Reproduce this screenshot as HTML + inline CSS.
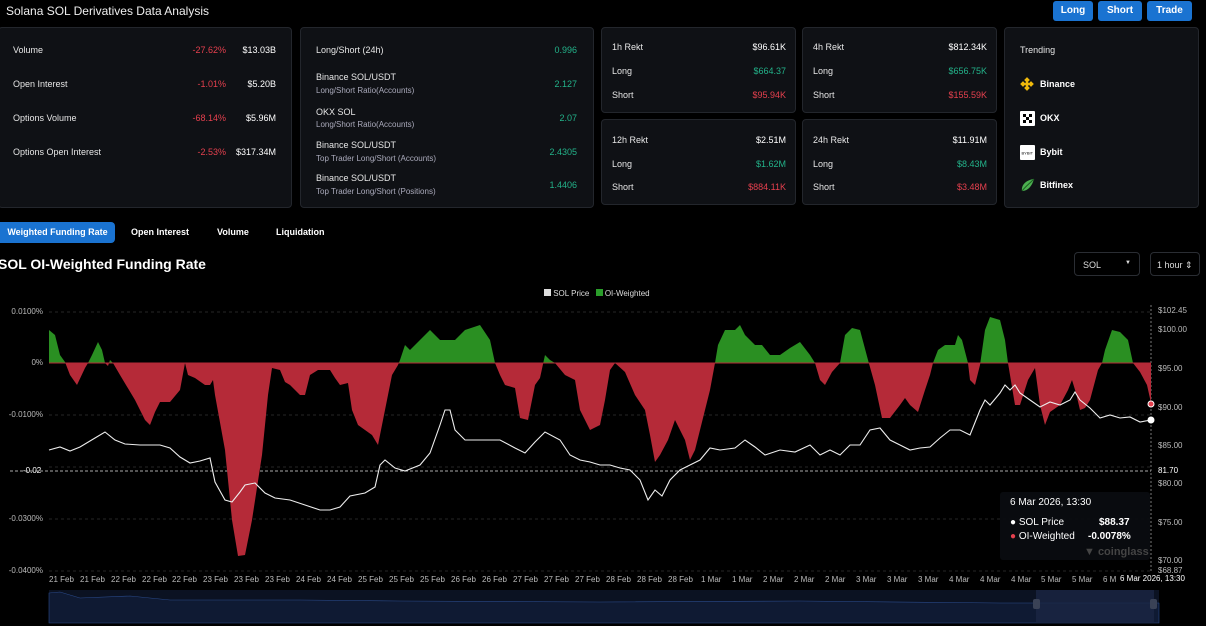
<!DOCTYPE html>
<html><head><meta charset="utf-8"><style>
*{margin:0;padding:0;box-sizing:border-box}
body{width:1206px;height:626px;background:#000;color:#e6e6e6;font-family:"Liberation Sans",sans-serif;position:relative;overflow:hidden;font-size:9px}
.a{position:absolute;white-space:nowrap}
.card{position:absolute;background:#0f1115;border:1px solid #23262c;border-radius:4px}
.r{color:#e5404e}.g{color:#23b38a}.w{color:#fff}
.btn{position:absolute;top:1px;height:20px;background:#1a73d1;color:#fff;font-weight:bold;font-size:10px;border-radius:3px;text-align:center;line-height:20px}
.sub{color:#aab;font-size:8px}
.yl{position:absolute;font-size:8px;color:#bbb;right:1163px}
.yr{position:absolute;font-size:8px;color:#bbb;left:1158px}
.xl{position:absolute;top:575px;font-size:8px;color:#bbb}
</style></head><body>
<div class="a" style="left:6px;top:4px;font-size:12px;color:#eee">Solana SOL Derivatives Data Analysis</div>
<div class="btn" style="left:1053px;width:40px">Long</div>
<div class="btn" style="left:1098px;width:44px">Short</div>
<div class="btn" style="left:1147px;width:45px">Trade</div>

<div class="card" style="left:-2px;top:27px;width:294px;height:181px"></div>
<div class="a" style="left:13px;top:45px">Volume</div><div class="a r" style="right:980px;top:45px">-27.62%</div><div class="a w" style="right:930px;top:45px">$13.03B</div>
<div class="a" style="left:13px;top:79px">Open Interest</div><div class="a r" style="right:980px;top:79px">-1.01%</div><div class="a w" style="right:930px;top:79px">$5.20B</div>
<div class="a" style="left:13px;top:113px">Options Volume</div><div class="a r" style="right:980px;top:113px">-68.14%</div><div class="a w" style="right:930px;top:113px">$5.96M</div>
<div class="a" style="left:13px;top:147px">Options Open Interest</div><div class="a r" style="right:980px;top:147px">-2.53%</div><div class="a w" style="right:930px;top:147px">$317.34M</div>

<div class="card" style="left:300px;top:27px;width:294px;height:181px"></div>
<div class="a" style="left:316px;top:45px">Long/Short (24h)</div><div class="a g" style="right:629px;top:45px">0.996</div>
<div class="a" style="left:316px;top:72px">Binance SOL/USDT</div><div class="a sub" style="left:316px;top:86px">Long/Short Ratio(Accounts)</div><div class="a g" style="right:629px;top:79px">2.127</div>
<div class="a" style="left:316px;top:107px">OKX SOL</div><div class="a sub" style="left:316px;top:120px">Long/Short Ratio(Accounts)</div><div class="a g" style="right:629px;top:113px">2.07</div>
<div class="a" style="left:316px;top:140px">Binance SOL/USDT</div><div class="a sub" style="left:316px;top:154px">Top Trader Long/Short (Accounts)</div><div class="a g" style="right:629px;top:147px">2.4305</div>
<div class="a" style="left:316px;top:173px">Binance SOL/USDT</div><div class="a sub" style="left:316px;top:187px">Top Trader Long/Short (Positions)</div><div class="a g" style="right:629px;top:180px">1.4406</div>

<div class="card" style="left:601px;top:27px;width:195px;height:86px"></div>
<div class="a" style="left:612px;top:42px">1h Rekt</div><div class="a w" style="right:420px;top:42px">$96.61K</div>
<div class="a" style="left:612px;top:66px">Long</div><div class="a g" style="right:420px;top:66px">$664.37</div>
<div class="a" style="left:612px;top:90px">Short</div><div class="a r" style="right:420px;top:90px">$95.94K</div>
<div class="card" style="left:601px;top:119px;width:195px;height:86px"></div>
<div class="a" style="left:612px;top:135px">12h Rekt</div><div class="a w" style="right:420px;top:135px">$2.51M</div>
<div class="a" style="left:612px;top:159px">Long</div><div class="a g" style="right:420px;top:159px">$1.62M</div>
<div class="a" style="left:612px;top:182px">Short</div><div class="a r" style="right:420px;top:182px">$884.11K</div>
<div class="card" style="left:802px;top:27px;width:195px;height:86px"></div>
<div class="a" style="left:813px;top:42px">4h Rekt</div><div class="a w" style="right:219px;top:42px">$812.34K</div>
<div class="a" style="left:813px;top:66px">Long</div><div class="a g" style="right:219px;top:66px">$656.75K</div>
<div class="a" style="left:813px;top:90px">Short</div><div class="a r" style="right:219px;top:90px">$155.59K</div>
<div class="card" style="left:802px;top:119px;width:195px;height:86px"></div>
<div class="a" style="left:813px;top:135px">24h Rekt</div><div class="a w" style="right:219px;top:135px">$11.91M</div>
<div class="a" style="left:813px;top:159px">Long</div><div class="a g" style="right:219px;top:159px">$8.43M</div>
<div class="a" style="left:813px;top:182px">Short</div><div class="a r" style="right:219px;top:182px">$3.48M</div>

<div class="card" style="left:1004px;top:27px;width:195px;height:181px"></div>
<div class="a" style="left:1020px;top:45px">Trending</div>
<svg class="a" style="left:1020px;top:77px" width="14" height="14" viewBox="0 0 14 14"><g fill="#f0b90b"><rect x="5" y="1" width="4" height="4" transform="rotate(45 7 3)"/><rect x="5" y="5" width="4" height="4" transform="rotate(45 7 7)"/><rect x="5" y="9" width="4" height="4" transform="rotate(45 7 11)"/><rect x="1" y="5" width="4" height="4" transform="rotate(45 3 7)"/><rect x="9" y="5" width="4" height="4" transform="rotate(45 11 7)"/></g></svg>
<div class="a w" style="left:1040px;top:79px;font-weight:bold">Binance</div>
<svg class="a" style="left:1020px;top:111px" width="15" height="15"><rect width="15" height="15" fill="#fff" rx="1"/><g fill="#000"><rect x="3" y="3" width="3" height="3"/><rect x="9" y="3" width="3" height="3"/><rect x="6" y="6" width="3" height="3"/><rect x="3" y="9" width="3" height="3"/><rect x="9" y="9" width="3" height="3"/></g></svg>
<div class="a w" style="left:1040px;top:113px;font-weight:bold">OKX</div>
<svg class="a" style="left:1020px;top:145px" width="15" height="15"><rect width="15" height="15" fill="#fff" rx="1"/><text x="1.5" y="9.5" font-size="4" fill="#000" font-family="Liberation Sans">BYBIT</text></svg>
<div class="a w" style="left:1040px;top:147px;font-weight:bold">Bybit</div>
<svg class="a" style="left:1020px;top:178px" width="15" height="15"><path d="M2 13C1 7 6 2 14 1C12 8 8 13 2 13Z" fill="#4caf50"/><path d="M2 13C5 9 9 6 14 1" stroke="#1b5e20" fill="none"/></svg>
<div class="a w" style="left:1040px;top:180px;font-weight:bold">Bitfinex</div>

<div class="a" style="left:0;top:222px;width:115px;height:21px;background:#1a73d1;border-radius:0 4px 4px 0;color:#fff;font-weight:bold;line-height:21px;text-align:center">Weighted Funding Rate</div>
<div class="a w" style="left:131px;top:227px;font-weight:bold">Open Interest</div>
<div class="a w" style="left:217px;top:227px;font-weight:bold">Volume</div>
<div class="a w" style="left:276px;top:227px;font-weight:bold">Liquidation</div>
<div class="a w" style="left:-2px;top:256px;font-weight:bold;font-size:14px">SOL OI-Weighted Funding Rate</div>
<div class="a" style="left:1074px;top:252px;width:66px;height:24px;border:1px solid #2a2d33;border-radius:4px;padding:7px 8px;color:#ddd">SOL<span style="float:right;font-size:6px">▼</span></div>
<div class="a" style="left:1150px;top:252px;width:50px;height:24px;border:1px solid #2a2d33;border-radius:4px;padding:7px 6px;color:#ddd">1 hour ⇕</div>
<div class="a" style="left:544px;top:289px;font-size:8px;color:#ddd"><span style="display:inline-block;width:7px;height:7px;background:#ddd"></span> SOL Price <span style="display:inline-block;width:7px;height:7px;background:#2a9d2a;margin-left:4px"></span> OI-Weighted</div>

<div class="yl" style="top:307px">0.0100%</div>
<div class="yl" style="top:358px">0%</div>
<div class="yl" style="top:410px">-0.0100%</div>
<div class="yl" style="top:514px">-0.0300%</div>
<div class="yl" style="top:566px">-0.0400%</div>
<div class="a" style="left:20px;top:466px;background:#000;color:#fff;font-size:8px;padding:0 3px">-0.02</div>
<div class="yr" style="top:306px">$102.45</div><div class="yr" style="top:325px">$100.00</div><div class="yr" style="top:364px">$95.00</div><div class="yr" style="top:403px">$90.00</div><div class="yr" style="top:441px">$85.00</div>
<div class="a" style="left:1154px;top:465px;background:#000;color:#fff;font-size:8px;padding:1px 4px">81.70</div>
<div class="yr" style="top:479px">$80.00</div><div class="yr" style="top:518px">$75.00</div><div class="yr" style="top:556px">$70.00</div><div class="yr" style="top:566px">$68.87</div>

<svg class="a" style="left:0;top:0" width="1206" height="626">
<defs>
<clipPath id="up"><rect x="0" y="0" width="1206" height="363"/></clipPath>
<clipPath id="dn"><rect x="0" y="363" width="1206" height="300"/></clipPath>
</defs>
<g stroke="#333" stroke-dasharray="3,3" stroke-width="0.8">
<line x1="49" y1="312" x2="1151" y2="312"/><line x1="49" y1="415" x2="1151" y2="415"/><line x1="49" y1="467" x2="1151" y2="467"/><line x1="49" y1="519" x2="1151" y2="519"/><line x1="49" y1="571" x2="1151" y2="571"/>
</g>
<line x1="1151" y1="305" x2="1151" y2="571" stroke="#777" stroke-dasharray="2,2"/>
<line x1="10" y1="471" x2="1151" y2="471" stroke="#aaa" stroke-dasharray="3,2"/>
<path d="M49 363L49 330L55 335L60 355L65 362L70 375L77 385L85 368L88 363L92 355L98 342L102 350L105 363L108 366L110 360L113 363L120 375L135 400L145 420L150 425L155 412L160 402L170 402L180 390L185 363L188 375L195 378L205 385L210 385L213 380L215 395L225 450L232 520L238 556L245 555L252 520L262 455L268 395L272 368L280 370L285 382L290 385L300 395L305 395L310 375L318 370L330 370L335 378L340 385L348 383L352 410L358 425L372 435L378 445L383 420L392 375L398 365L400 360L405 345L410 350L420 340L430 330L440 340L455 340L465 330L480 325L490 340L495 363L500 375L505 385L515 388L520 418L528 420L535 385L540 378L545 355L550 360L555 363L565 375L575 380L580 410L590 430L600 425L605 400L610 370L615 363L625 372L635 395L645 410L650 435L655 462L660 455L668 440L675 420L685 440L690 460L695 450L700 430L710 390L715 363L718 345L725 330L735 330L740 325L745 335L755 345L762 345L770 355L780 355L790 348L800 342L810 355L815 363L820 380L825 385L832 372L840 363L845 335L852 328L860 330L868 360L875 385L882 418L890 418L900 405L905 398L910 405L918 412L925 390L930 375L933 363L938 350L945 345L955 345L958 335L962 340L968 363L970 380L975 385L980 365L985 330L990 317L1000 320L1005 340L1008 363L1015 405L1020 405L1028 380L1035 368L1040 405L1045 425L1050 412L1060 405L1068 390L1072 380L1076 393L1080 410L1085 408L1090 400L1098 370L1102 363L1105 350L1112 330L1120 332L1128 340L1133 363L1140 372L1147 385L1151 403L1151 363Z" fill="#2a8f22" clip-path="url(#up)"/>
<path d="M49 363L49 330L55 335L60 355L65 362L70 375L77 385L85 368L88 363L92 355L98 342L102 350L105 363L108 366L110 360L113 363L120 375L135 400L145 420L150 425L155 412L160 402L170 402L180 390L185 363L188 375L195 378L205 385L210 385L213 380L215 395L225 450L232 520L238 556L245 555L252 520L262 455L268 395L272 368L280 370L285 382L290 385L300 395L305 395L310 375L318 370L330 370L335 378L340 385L348 383L352 410L358 425L372 435L378 445L383 420L392 375L398 365L400 360L405 345L410 350L420 340L430 330L440 340L455 340L465 330L480 325L490 340L495 363L500 375L505 385L515 388L520 418L528 420L535 385L540 378L545 355L550 360L555 363L565 375L575 380L580 410L590 430L600 425L605 400L610 370L615 363L625 372L635 395L645 410L650 435L655 462L660 455L668 440L675 420L685 440L690 460L695 450L700 430L710 390L715 363L718 345L725 330L735 330L740 325L745 335L755 345L762 345L770 355L780 355L790 348L800 342L810 355L815 363L820 380L825 385L832 372L840 363L845 335L852 328L860 330L868 360L875 385L882 418L890 418L900 405L905 398L910 405L918 412L925 390L930 375L933 363L938 350L945 345L955 345L958 335L962 340L968 363L970 380L975 385L980 365L985 330L990 317L1000 320L1005 340L1008 363L1015 405L1020 405L1028 380L1035 368L1040 405L1045 425L1050 412L1060 405L1068 390L1072 380L1076 393L1080 410L1085 408L1090 400L1098 370L1102 363L1105 350L1112 330L1120 332L1128 340L1133 363L1140 372L1147 385L1151 403L1151 363Z" fill="#b52a38" clip-path="url(#dn)"/>
<path d="M49 363H1151" stroke="#b52a38" stroke-width="1"/>
<rect x="1000" y="492" width="150" height="68" rx="3" fill="#0a0c10" opacity="0.92"/>
<polyline fill="none" stroke="#eee" stroke-width="1.1" points="49,450 60,447 70,451 80,447 95,438 105,432 115,440 125,444 140,445 160,445 170,448 180,457 190,463 200,461 210,458 215,482 225,500 232,502 240,492 245,485 255,483 265,493 275,498 290,500 305,505 320,510 330,510 340,507 350,496 365,493 375,487 380,465 385,460 395,468 405,471 420,465 430,453 440,425 445,410 450,410 455,430 465,440 480,440 500,440 515,448 525,453 535,442 545,432 560,440 570,455 580,460 590,462 600,465 610,465 620,468 630,470 640,480 648,500 655,490 662,496 670,480 680,470 690,465 700,460 710,448 720,450 735,448 745,440 755,447 765,455 780,450 795,452 810,445 820,455 830,450 840,455 850,445 860,445 870,430 880,428 890,440 900,445 910,450 920,448 930,447 940,438 950,430 960,430 970,435 980,410 985,400 990,405 1000,393 1005,385 1010,390 1015,385 1020,393 1030,400 1040,407 1050,402 1060,405 1070,400 1075,392 1080,400 1090,408 1100,418 1110,415 1120,418 1130,417 1140,422 1151,420"/>
<circle cx="1151" cy="404" r="3" fill="#e5404e" stroke="#fff"/>
<circle cx="1151" cy="420" r="3.5" fill="#fff"/>
<rect x="49" y="590" width="1110" height="33" fill="#0b1222"/>
<path d="M49 593L60 592L80 598L130 596L170 600L300 600L400 601L600 602L800 601L1000 603L1159 603L1159 623L49 623Z" fill="#0f1a33" stroke="#2a4a8a" stroke-width="0.6"/>
<rect x="1036" y="590" width="118" height="33" fill="#1a2544" opacity="0.8"/>
<rect x="1033" y="599" width="7" height="10" rx="2" fill="#3a4256"/><rect x="1150" y="599" width="7" height="10" rx="2" fill="#3a4256"/>
</svg>
<div class="a w" style="left:1010px;top:497px;font-size:10px">6 Mar 2026, 13:30</div>
<div class="a w" style="left:1010px;top:517px;font-size:10px">● SOL Price</div><div class="a w" style="left:1099px;top:517px;font-size:10px;font-weight:bold">$88.37</div>
<div class="a w" style="left:1010px;top:531px;font-size:10px"><span class="r">●</span> OI-Weighted</div><div class="a w" style="left:1088px;top:531px;font-size:10px;font-weight:bold">-0.0078%</div>
<div class="a" style="left:1084px;top:546px;color:#444;font-size:11px;font-weight:bold">▼ coinglass</div>

<div class="xl" style="left:49px">21 Feb</div><div class="xl" style="left:80px">21 Feb</div><div class="xl" style="left:111px">22 Feb</div><div class="xl" style="left:142px">22 Feb</div><div class="xl" style="left:172px">22 Feb</div><div class="xl" style="left:203px">23 Feb</div><div class="xl" style="left:234px">23 Feb</div><div class="xl" style="left:265px">23 Feb</div><div class="xl" style="left:296px">24 Feb</div><div class="xl" style="left:327px">24 Feb</div><div class="xl" style="left:358px">25 Feb</div><div class="xl" style="left:389px">25 Feb</div><div class="xl" style="left:420px">25 Feb</div><div class="xl" style="left:451px">26 Feb</div><div class="xl" style="left:482px">26 Feb</div><div class="xl" style="left:513px">27 Feb</div><div class="xl" style="left:544px">27 Feb</div><div class="xl" style="left:575px">27 Feb</div><div class="xl" style="left:606px">28 Feb</div><div class="xl" style="left:637px">28 Feb</div><div class="xl" style="left:668px">28 Feb</div><div class="xl" style="left:701px">1 Mar</div><div class="xl" style="left:732px">1 Mar</div><div class="xl" style="left:763px">2 Mar</div><div class="xl" style="left:794px">2 Mar</div><div class="xl" style="left:825px">2 Mar</div><div class="xl" style="left:856px">3 Mar</div><div class="xl" style="left:887px">3 Mar</div><div class="xl" style="left:918px">3 Mar</div><div class="xl" style="left:949px">4 Mar</div><div class="xl" style="left:980px">4 Mar</div><div class="xl" style="left:1011px">4 Mar</div><div class="xl" style="left:1041px">5 Mar</div><div class="xl" style="left:1072px">5 Mar</div><div class="xl" style="left:1103px">6 M</div>
<div class="a" style="left:1117px;top:573px;background:#000;color:#fff;font-size:8px;padding:1px 3px">6 Mar 2026, 13:30</div>
</body></html>
